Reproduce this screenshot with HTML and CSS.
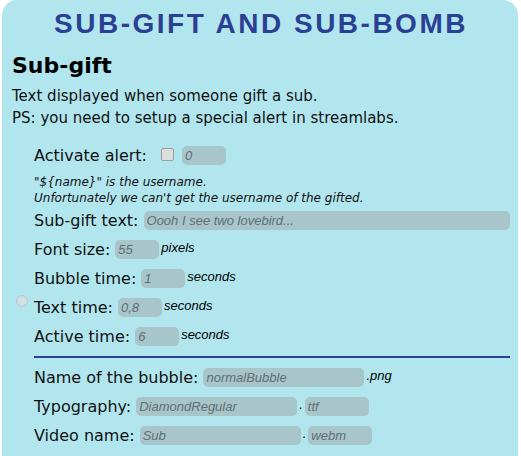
FILE: index.html
```html
<!DOCTYPE html>
<html lang="en">
<head>
<meta charset="utf-8">
<title>Sub-gift and Sub-bomb</title>
<link rel="stylesheet" href="styles.css">
</head>
<body>
<div class="panel">
  <h1 class="title">SUB-GIFT AND SUB-BOMB</h1>
  <h2 class="section-title">Sub-gift</h2>
  <p class="desc">Text displayed when someone gift a sub.<br>PS: you need to setup a special alert in streamlabs.</p>
  <div class="form">
    <div class="row">
      <label class="lbl lbl-check">Activate alert:</label>
      <input type="checkbox" class="check">
      <input class="field field-sm" placeholder="0">
    </div>
    <p class="note">"${name}" is the username.<br>Unfortunately we can't get the username of the gifted.</p>
    <div class="row">
      <label class="lbl">Sub-gift text:</label>
      <input class="field field-grow" placeholder="Oooh I see two lovebird...">
    </div>
    <div class="row">
      <label class="lbl">Font size:</label>
      <input class="field field-sm" placeholder="55">
      <span class="unit">pixels</span>
    </div>
    <div class="row">
      <label class="lbl">Bubble time:</label>
      <input class="field field-sm" placeholder="1">
      <span class="unit">seconds</span>
    </div>
    <div class="row">
      <input type="radio" class="radio">
      <label class="lbl">Text time:</label>
      <input class="field field-sm" placeholder="0,8">
      <span class="unit">seconds</span>
    </div>
    <div class="row">
      <label class="lbl">Active time:</label>
      <input class="field field-sm" placeholder="6">
      <span class="unit">seconds</span>
    </div>
    <hr class="sep">
    <div class="row">
      <label class="lbl">Name of the bubble:</label>
      <input class="field field-md" placeholder="normalBubble">
      <span class="unit">.png</span>
    </div>
    <div class="row">
      <label class="lbl">Typography:</label>
      <input class="field field-md" placeholder="DiamondRegular">
      <span class="dot">.</span>
      <input class="field field-ext" placeholder="ttf">
    </div>
    <div class="row">
      <label class="lbl">Video name:</label>
      <input class="field field-md" placeholder="Sub">
      <span class="dot">.</span>
      <input class="field field-ext" placeholder="webm">
    </div>
  </div>
</div>
</body>
</html>
```
FILE: styles.css
```css
html, body {
  margin: 0;
  background: #ffffff;
}

body {
  font-family: "DejaVu Sans", Verdana, sans-serif;
  color: #000;
}

.panel {
  margin: 0 3px 0 2px;
  background: #b2e6ef;
  border-radius: 15px 15px 0 0;
  padding: 8px 8px 40px 10px;
}

.title {
  margin: 0;
  font: bold 28px/32px "Liberation Sans", Arial, sans-serif;
  letter-spacing: 2.5px;
  text-align: center;
  color: #2b4093;
}

.section-title {
  margin: 13px 0 0;
  font-size: 22px;
  line-height: 26px;
  font-weight: bold;
}

.desc {
  margin: 6px 0 0;
  font-size: 15px;
  line-height: 22px;
  color: #111;
}

.form {
  margin: 17px 0 0 22px;
}

.row {
  display: flex;
  align-items: flex-start;
  margin-bottom: 10px;
}

.lbl {
  box-sizing: border-box;
  height: 19px;
  font-size: 16px;
  line-height: 18px;
  padding-top: 1px;
  margin-right: 5px;
  white-space: nowrap;
  color: #111;
}

.lbl-check {
  margin-right: 14px;
}

.check {
  appearance: none;
  -webkit-appearance: none;
  box-sizing: border-box;
  width: 13px;
  height: 13px;
  margin: 2px 8px 0 0;
  border: 1px solid #9c9c9c;
  border-radius: 2px;
  background: #dcdede;
}

.radio {
  appearance: none;
  -webkit-appearance: none;
  box-sizing: border-box;
  width: 12px;
  height: 12px;
  margin: -3px 6px 0 -18px;
  border: 1px solid #b3c6ca;
  border-radius: 50%;
  background: #cfe0e4;
}

.field {
  box-sizing: border-box;
  height: 19px;
  margin: 0;
  border: none;
  border-radius: 5px;
  padding: 0 3px;
  background: #a8c5ca;
  font: italic 13px/15px "Liberation Sans", Arial, sans-serif;
  color: #4c5a5e;
  outline: none;
}

.field::placeholder {
  color: #5f6f74;
  opacity: 1;
}

.field-sm {
  width: 44px;
}

.field-grow {
  flex: 1 1 auto;
  min-width: 0;
}

.field-md {
  width: 161px;
}

.field-ext {
  width: 64px;
}

.unit {
  font: italic 13px/15px "Liberation Sans", Arial, sans-serif;
  margin-left: 2px;
  color: #000;
}

.dot {
  font: italic 13px/15px "Liberation Sans", Arial, sans-serif;
  margin: 0 2px;
}

.note {
  margin: -1px 0 5px;
  font-size: 12px;
  line-height: 16px;
  font-style: italic;
  color: #111;
}

.sep {
  height: 2px;
  margin: 0 0 10px;
  border: none;
  background: #2b4093;
}
```
